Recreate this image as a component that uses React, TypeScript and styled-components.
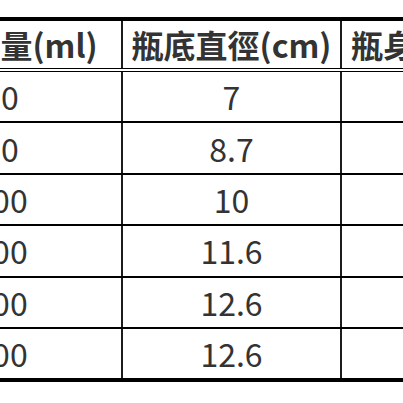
import React from "react";
import styled, { createGlobalStyle } from "styled-components";

const Global = createGlobalStyle`
  html, body { margin: 0; padding: 0; background: #fff; overflow: hidden; }
  body { font-family: "Noto Sans CJK TC", "Noto Sans", sans-serif; color: #333; }
`;

const Page = styled.div`
  width: 403px;
  height: 403px;
  overflow: hidden;
  padding-top: 17px;
  box-sizing: border-box;
`;

const Table = styled.table`
  border-collapse: collapse;
  table-layout: fixed;
  width: 681px;
  margin-left: -121px;
  font-size: 32px;
`;

const HeadCell = styled.th`
  font-weight: 700;
  text-align: center;
  padding: 0 2px;
  height: 47px;
  line-height: 47px;
  white-space: nowrap;
  border-top: 4px solid #000;
  border-bottom: 4px double #000;
  border-left: 2px solid #1c1c1c;
  border-right: 2px solid #1c1c1c;
  color: #333;
`;

const Cell = styled.td<{ $last?: boolean }>`
  text-align: center;
  padding: 0 2px;
  height: 49.4px;
  line-height: 49px;
  white-space: nowrap;
  border-bottom: ${(p) => (p.$last ? "4px" : "2px")} solid #000;
  border-left: 2px solid #1c1c1c;
  border-right: 2px solid #1c1c1c;
  color: #333;
`;

const rows = [
  ["30", "7", "6.5"],
  ["60", "8.7", "8.4"],
  ["100", "10", "10.1"],
  ["200", "11.6", "14.2"],
  ["300", "12.6", "17.8"],
  ["500", "12.6", "23.5"],
];

export default function App() {
  return (
    <>
      <Global />
      <Page>
        <Table>
          <colgroup>
            <col style={{ width: 242 }} />
            <col style={{ width: 219 }} />
            <col style={{ width: 220 }} />
          </colgroup>
          <thead>
            <tr>
              <HeadCell>瓶子容量(ml)</HeadCell>
              <HeadCell>瓶底直徑(cm)</HeadCell>
              <HeadCell>瓶身高度(cm)</HeadCell>
            </tr>
          </thead>
          <tbody>
            {rows.map((r, i) => (
              <tr key={i}>
                {r.map((v, j) => (
                  <Cell key={j} $last={i === rows.length - 1}>
                    {v}
                  </Cell>
                ))}
              </tr>
            ))}
          </tbody>
        </Table>
      </Page>
    </>
  );
}
